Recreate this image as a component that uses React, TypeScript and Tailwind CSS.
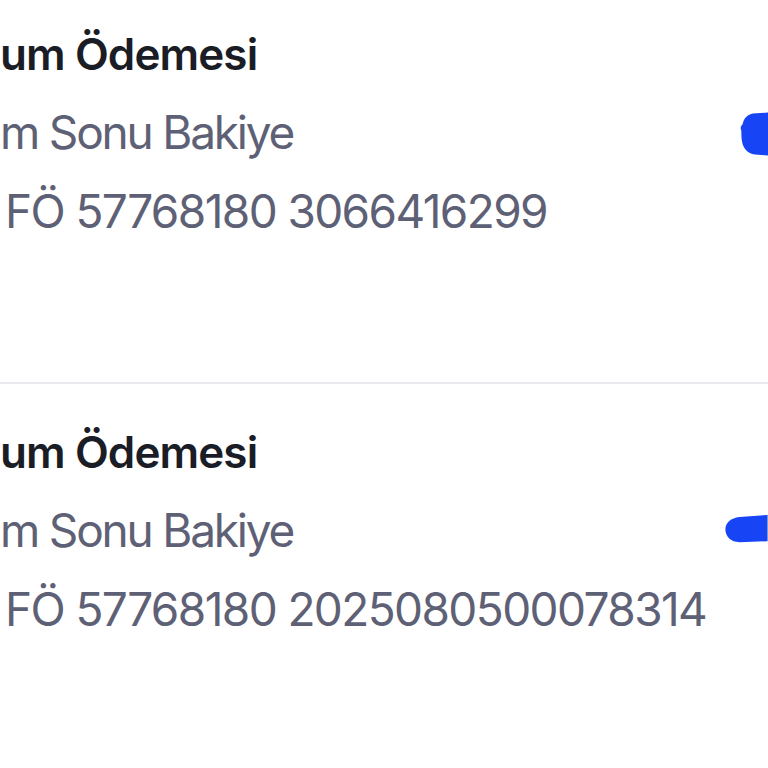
import React from 'react'

type Payment = {
  title: string
  label: string
  reference: string
  blob: 'round' | 'pill'
}

const payments: Payment[] = [
  { title: 'um Ödemesi', label: 'm Sonu Bakiye', reference: 'FÖ 57768180 3066416299', blob: 'round' },
  { title: 'um Ödemesi', label: 'm Sonu Bakiye', reference: 'FÖ 57768180 2025080500078314', blob: 'pill' },
]

function Scribble({ kind }: { kind: Payment['blob'] }) {
  if (kind === 'round') {
    return (
      <svg width="28" height="46" viewBox="0 0 30 48" className="absolute right-0 top-[112px]">
        <path
          d="M30 0 L14 1 C8 2 4 6 3 12 C2 14 0 15 1 18 C2 20 1 24 2 30 C3 38 8 44 16 45 L30 46 Z"
          fill="#1745f6"
        />
      </svg>
    )
  }
  return (
    <svg width="44" height="30" viewBox="0 0 46 32" className="absolute right-0 top-[131px]">
      <path
        d="M46 0 L16 2 C7 3 1 8 1 15 C1 23 7 29 16 29 L46 28 Z"
        fill="#1745f6"
      />
    </svg>
  )
}

function PaymentRow({ p, first }: { p: Payment; first: boolean }) {
  return (
    <div className={`relative ${first ? 'pt-[14px] pb-[131px]' : 'pt-[28px] pb-[100px]'}`}>
      <p className="text-[44px] leading-[80px] font-semibold tracking-[-0.9px] text-[#1b1d26] whitespace-nowrap">
        {p.title}
      </p>
      <p className="text-[46px] leading-[77px] tracking-[-2.2px] text-[#5e6175] whitespace-nowrap">
        {p.label}
      </p>
      <p className="pl-[5px] text-[46px] leading-[80px] tracking-[-1.6px] text-[#5e6175] whitespace-nowrap">
        {p.reference}
      </p>
      <Scribble kind={p.blob} />
    </div>
  )
}

export default function App() {
  return (
    <main
      className="w-[768px] h-[768px] overflow-hidden bg-white"
      style={{ fontFamily: 'Inter, "Noto Sans", sans-serif' }}
    >
      {payments.map((p, i) => (
        <div key={i} className={i > 0 ? 'border-t-2 border-[#ebebef]' : ''}>
          <PaymentRow p={p} first={i === 0} />
        </div>
      ))}
    </main>
  )
}
